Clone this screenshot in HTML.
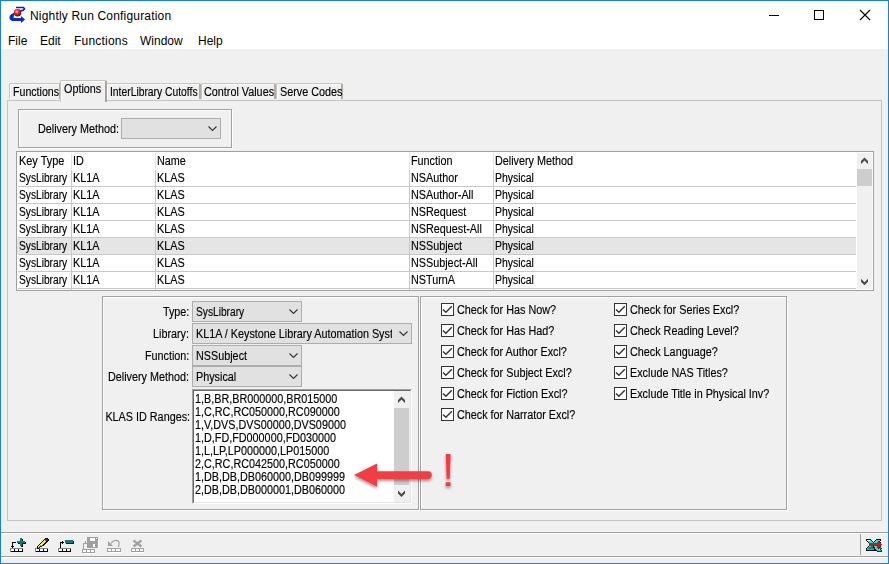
<!DOCTYPE html>
<html><head><meta charset="utf-8">
<style>
*{box-sizing:border-box}
html,body{margin:0;padding:0}
body{width:889px;height:564px;overflow:hidden;background:#f0f0f0;position:relative;font-family:"Liberation Sans",sans-serif;color:#000}
.a{position:absolute}
.t{position:absolute;white-space:nowrap;font-size:12px;line-height:13px;transform-origin:0 0;transform:scaleX(0.9);-webkit-text-stroke:0.15px #000}
.t12{position:absolute;white-space:nowrap;font-size:12px;line-height:15px}
.combo{position:absolute;background:#e1e1e1;border:1px solid #adadad}
.chev{position:absolute;width:8px;height:5px}
.cb{position:absolute;width:13px;height:13px;border:1px solid #333;background:#fff}
.cb svg{position:absolute;left:0;top:0}
.hl{position:absolute;left:18px;width:838px;height:1px;background:#c8c8c8}
.vl{position:absolute;width:1px;background:#c8c8c8}
</style></head><body>

<div class="a" style="left:0;top:0;width:889px;height:49px;background:#fff"></div>
<svg class="a" style="left:9px;top:6px" width="17" height="18" viewBox="9 6 17 18">
  <defs><radialGradient id="rb" cx="0.4" cy="0.35" r="0.65"><stop offset="0" stop-color="#ffd0d0"/><stop offset="0.45" stop-color="#e8202a"/><stop offset="1" stop-color="#700010"/></radialGradient></defs>
  <path d="M16 7.5H23.5L24.5 9L23 10.5H21.5L19.5 12" fill="none" stroke="#0020c8" stroke-width="1.6"/>
  <path d="M14 13C10 14 8.5 17 10 19.5C11 21 12 21 14 21H21V23L25 19.5L21 16V18H15C13.5 18 13 17.5 14 16Z" fill="#0030d0"/>
  <circle cx="17.5" cy="12.8" r="3.8" fill="url(#rb)"/>
</svg>
<div class="t12" style="left:30px;top:9px;letter-spacing:0.18px">Nightly Run Configuration</div>
<div class="a" style="left:769px;top:15px;width:10px;height:1px;background:#000"></div>
<div class="a" style="left:814px;top:10px;width:10px;height:10px;border:1px solid #000"></div>
<svg class="a" style="left:859px;top:9px" width="12" height="12" viewBox="0 0 12 12"><path d="M1 1L11 11M11 1L1 11" stroke="#000" stroke-width="1.1"/></svg>
<div class="t12" style="left:8px;top:34px">File</div>
<div class="t12" style="left:40px;top:34px">Edit</div>
<div class="t12" style="left:74px;top:34px;letter-spacing:0.2px">Functions</div>
<div class="t12" style="left:140px;top:34px">Window</div>
<div class="t12" style="left:198px;top:34px">Help</div>

<div class="a" style="left:7px;top:100px;width:875px;height:421px;border:1px solid #c4c4c4"></div>
<div class="a" style="left:9px;top:83px;width:52px;height:16px;border:1px solid #c8c5be;border-right:2px solid #b0ada6;border-bottom:none;border-radius:2px 2px 0 0;background:#f0f0f0;box-shadow:inset 1px 1px 0 #fbfbfb"></div>
<div class="t" style="left:13.2px;top:86px;transform:scaleX(0.885)">Functions</div>
<div class="a" style="left:106px;top:83px;width:95px;height:16px;border:1px solid #c8c5be;border-right:2px solid #b0ada6;border-bottom:none;border-radius:2px 2px 0 0;background:#f0f0f0;box-shadow:inset 1px 1px 0 #fbfbfb"></div>
<div class="t" style="left:110px;top:86px;transform:scaleX(0.86)">InterLibrary Cutoffs</div>
<div class="a" style="left:201px;top:83px;width:75px;height:16px;border:1px solid #c8c5be;border-right:2px solid #b0ada6;border-bottom:none;border-radius:2px 2px 0 0;background:#f0f0f0;box-shadow:inset 1px 1px 0 #fbfbfb"></div>
<div class="t" style="left:204px;top:86px">Control Values</div>
<div class="a" style="left:276px;top:83px;width:67px;height:16px;border:1px solid #c8c5be;border-right:2px solid #b0ada6;border-bottom:none;border-radius:2px 2px 0 0;background:#f0f0f0;box-shadow:inset 1px 1px 0 #fbfbfb"></div>
<div class="t" style="left:280px;top:86px">Serve Codes</div>
<div class="a" style="left:60px;top:80px;width:47px;height:22px;border:1px solid #c8c5be;border-right:2px solid #a8a5a0;border-bottom:none;border-radius:2px 2px 0 0;background:#f0f0f0;box-shadow:inset 1px 1px 0 #fbfbfb"></div>
<div class="t" style="left:64px;top:83px">Options</div>
<div class="a" style="left:18px;top:109px;width:214px;height:39px;border:1px solid #a0a0a0;box-shadow:inset 1px 1px 0 #fff,1px 1px 0 #fff"></div>
<div class="t" style="left:38px;top:123px">Delivery Method:</div>
<div class="combo" style="left:121px;top:118px;width:100px;height:21px"></div>
<svg class="a" style="left:207.5px;top:126px" width="9" height="5" viewBox="0 0 9 5"><path d="M0.5 0.5L4.5 4.5L8.5 0.5" fill="none" stroke="#333" stroke-width="1.1"/></svg>
<div class="a" style="left:16px;top:151px;width:858px;height:140px;border:1px solid #a0a0a0;background:#fff"></div>
<div class="a" style="left:857px;top:153px;width:15px;height:136px;background:#f0f0f0"></div>
<div class="a" style="left:857px;top:169px;width:15px;height:17px;background:#cdcdcd"></div>
<svg class="a" style="left:860px;top:157px" width="9" height="8" viewBox="0 0 9 8"><path d="M1 7L4.5 3.5L8 7V4L4.5 0.5L1 4Z" fill="#4a4a4a"/></svg>
<svg class="a" style="left:860px;top:278px" width="9" height="8" viewBox="0 0 9 8"><path d="M1 0.8L4.5 4.3L8 0.8V3.8L4.5 7.3L1 3.8Z" fill="#4a4a4a"/></svg>
<div class="vl" style="left:71px;top:153px;height:16px;background:#e5e5e5"></div>
<div class="vl" style="left:155px;top:153px;height:16px;background:#e5e5e5"></div>
<div class="vl" style="left:409px;top:153px;height:16px;background:#e5e5e5"></div>
<div class="vl" style="left:493px;top:153px;height:16px;background:#e5e5e5"></div>
<div class="a" style="left:17px;top:238px;width:839px;height:16px;background:#e5e5e5"></div>
<div class="hl" style="top:186px"></div>
<div class="hl" style="top:203px"></div>
<div class="hl" style="top:220px"></div>
<div class="hl" style="top:237px"></div>
<div class="hl" style="top:254px"></div>
<div class="hl" style="top:271px"></div>
<div class="hl" style="top:288px"></div>
<div class="vl" style="left:71px;top:170px;height:120px"></div>
<div class="vl" style="left:155px;top:170px;height:120px"></div>
<div class="vl" style="left:409px;top:170px;height:120px"></div>
<div class="vl" style="left:493px;top:170px;height:120px"></div>
<div class="t" style="left:19px;top:155px;transform:scaleX(0.91)">Key Type</div>
<div class="t" style="left:73px;top:155px">ID</div>
<div class="t" style="left:157px;top:155px">Name</div>
<div class="t" style="left:411px;top:155px">Function</div>
<div class="t" style="left:495px;top:155px">Delivery Method</div>
<div class="t" style="left:19px;top:172px;transform:scaleX(0.85)">SysLibrary</div>
<div class="t" style="left:73px;top:172px">KL1A</div>
<div class="t" style="left:157px;top:172px">KLAS</div>
<div class="t" style="left:411px;top:172px">NSAuthor</div>
<div class="t" style="left:495px;top:172px;transform:scaleX(0.87)">Physical</div>
<div class="t" style="left:19px;top:189px;transform:scaleX(0.85)">SysLibrary</div>
<div class="t" style="left:73px;top:189px">KL1A</div>
<div class="t" style="left:157px;top:189px">KLAS</div>
<div class="t" style="left:411px;top:189px">NSAuthor-All</div>
<div class="t" style="left:495px;top:189px;transform:scaleX(0.87)">Physical</div>
<div class="t" style="left:19px;top:206px;transform:scaleX(0.85)">SysLibrary</div>
<div class="t" style="left:73px;top:206px">KL1A</div>
<div class="t" style="left:157px;top:206px">KLAS</div>
<div class="t" style="left:411px;top:206px">NSRequest</div>
<div class="t" style="left:495px;top:206px;transform:scaleX(0.87)">Physical</div>
<div class="t" style="left:19px;top:223px;transform:scaleX(0.85)">SysLibrary</div>
<div class="t" style="left:73px;top:223px">KL1A</div>
<div class="t" style="left:157px;top:223px">KLAS</div>
<div class="t" style="left:411px;top:223px">NSRequest-All</div>
<div class="t" style="left:495px;top:223px;transform:scaleX(0.87)">Physical</div>
<div class="t" style="left:19px;top:240px;transform:scaleX(0.85)">SysLibrary</div>
<div class="t" style="left:73px;top:240px">KL1A</div>
<div class="t" style="left:157px;top:240px">KLAS</div>
<div class="t" style="left:411px;top:240px">NSSubject</div>
<div class="t" style="left:495px;top:240px;transform:scaleX(0.87)">Physical</div>
<div class="t" style="left:19px;top:257px;transform:scaleX(0.85)">SysLibrary</div>
<div class="t" style="left:73px;top:257px">KL1A</div>
<div class="t" style="left:157px;top:257px">KLAS</div>
<div class="t" style="left:411px;top:257px">NSSubject-All</div>
<div class="t" style="left:495px;top:257px;transform:scaleX(0.87)">Physical</div>
<div class="t" style="left:19px;top:274px;transform:scaleX(0.85)">SysLibrary</div>
<div class="t" style="left:73px;top:274px">KL1A</div>
<div class="t" style="left:157px;top:274px">KLAS</div>
<div class="t" style="left:411px;top:274px">NSTurnA</div>
<div class="t" style="left:495px;top:274px;transform:scaleX(0.87)">Physical</div>
<div class="a" style="left:102px;top:296px;width:317px;height:214px;border:1px solid #a0a0a0;box-shadow:inset 1px 1px 0 #fff,1px 1px 0 #fff"></div>
<div class="a" style="left:420px;top:296px;width:367px;height:214px;border:1px solid #a0a0a0;box-shadow:inset 1px 1px 0 #fff,1px 1px 0 #fff"></div>
<div class="t" style="right:700px;top:306px;transform-origin:100% 0;transform:scaleX(0.9)">Type:</div>
<div class="t" style="right:700px;top:328px;transform-origin:100% 0;transform:scaleX(0.9)">Library:</div>
<div class="t" style="right:700px;top:350px;transform-origin:100% 0;transform:scaleX(0.9)">Function:</div>
<div class="t" style="right:700px;top:371px;transform-origin:100% 0;transform:scaleX(0.9)">Delivery Method:</div>
<div class="t" style="right:699px;top:411px;transform-origin:100% 0;transform:scaleX(0.9)">KLAS ID Ranges:</div>
<div class="combo" style="left:192px;top:301px;width:110px;height:21px"></div>
<div class="t" style="left:196px;top:306px;transform:scaleX(0.85)">SysLibrary</div>
<svg class="a" style="left:288.5px;top:309px" width="9" height="5" viewBox="0 0 9 5"><path d="M0.5 0.5L4.5 4.5L8.5 0.5" fill="none" stroke="#333" stroke-width="1.1"/></svg>
<div class="combo" style="left:192px;top:323px;width:220px;height:21px"></div>
<div class="a" style="left:193px;top:324px;width:199px;height:19px;overflow:hidden"><div class="t" style="left:3px;top:4px">KL1A / Keystone Library Automation Systems</div></div>
<svg class="a" style="left:398.5px;top:331px" width="9" height="5" viewBox="0 0 9 5"><path d="M0.5 0.5L4.5 4.5L8.5 0.5" fill="none" stroke="#333" stroke-width="1.1"/></svg>
<div class="combo" style="left:192px;top:345px;width:110px;height:21px"></div>
<div class="t" style="left:196px;top:350px">NSSubject</div>
<svg class="a" style="left:288.5px;top:353px" width="9" height="5" viewBox="0 0 9 5"><path d="M0.5 0.5L4.5 4.5L8.5 0.5" fill="none" stroke="#333" stroke-width="1.1"/></svg>
<div class="combo" style="left:192px;top:366px;width:110px;height:21px"></div>
<div class="t" style="left:196px;top:371px">Physical</div>
<svg class="a" style="left:288.5px;top:374px" width="9" height="5" viewBox="0 0 9 5"><path d="M0.5 0.5L4.5 4.5L8.5 0.5" fill="none" stroke="#333" stroke-width="1.1"/></svg>
<div class="a" style="left:192px;top:389px;width:220px;height:115px;background:#fff;border-top:1px solid #a0a0a0;border-left:1px solid #a0a0a0;border-right:1px solid #fff;border-bottom:1px solid #fff"></div>
<div class="a" style="left:193px;top:390px;width:218px;height:113px;border-top:1px solid #696969;border-left:1px solid #696969;border-right:1px solid #e3e3e3;border-bottom:1px solid #e3e3e3"></div>
<div class="a" style="left:394px;top:391px;width:16px;height:111px;background:#f0f0f0"></div>
<div class="a" style="left:394px;top:408px;width:15px;height:77px;background:#cdcdcd"></div>
<svg class="a" style="left:397px;top:396px" width="9" height="8" viewBox="0 0 9 8"><path d="M1 7L4.5 3.5L8 7V4L4.5 0.5L1 4Z" fill="#4a4a4a"/></svg>
<svg class="a" style="left:397px;top:490px" width="9" height="8" viewBox="0 0 9 8"><path d="M1 0.6L4.5 4.1L8 0.6V3.6L4.5 7.1L1 3.6Z" fill="#4a4a4a"/></svg>
<div class="t" style="left:195px;top:393px">1,B,BR,BR000000,BR015000</div>
<div class="t" style="left:195px;top:406px">1,C,RC,RC050000,RC090000</div>
<div class="t" style="left:195px;top:419px">1,V,DVS,DVS00000,DVS09000</div>
<div class="t" style="left:195px;top:432px">1,D,FD,FD000000,FD030000</div>
<div class="t" style="left:195px;top:445px">1,L,LP,LP000000,LP015000</div>
<div class="t" style="left:195px;top:458px">2,C,RC,RC042500,RC050000</div>
<div class="t" style="left:195px;top:471px">1,DB,DB,DB060000,DB099999</div>
<div class="t" style="left:195px;top:484px">2,DB,DB,DB000001,DB060000</div>
<div class="cb" style="left:441px;top:303px"><svg width="11" height="11" viewBox="0 0 11 11"><path d="M1 5.4L3.9 8.2L9.8 2.3" fill="none" stroke="#333" stroke-width="1.4"/></svg></div>
<div class="t" style="left:456.5px;top:304px">Check for Has Now?</div>
<div class="cb" style="left:441px;top:324px"><svg width="11" height="11" viewBox="0 0 11 11"><path d="M1 5.4L3.9 8.2L9.8 2.3" fill="none" stroke="#333" stroke-width="1.4"/></svg></div>
<div class="t" style="left:456.5px;top:325px">Check for Has Had?</div>
<div class="cb" style="left:441px;top:345px"><svg width="11" height="11" viewBox="0 0 11 11"><path d="M1 5.4L3.9 8.2L9.8 2.3" fill="none" stroke="#333" stroke-width="1.4"/></svg></div>
<div class="t" style="left:456.5px;top:346px">Check for Author Excl?</div>
<div class="cb" style="left:441px;top:366px"><svg width="11" height="11" viewBox="0 0 11 11"><path d="M1 5.4L3.9 8.2L9.8 2.3" fill="none" stroke="#333" stroke-width="1.4"/></svg></div>
<div class="t" style="left:456.5px;top:367px">Check for Subject Excl?</div>
<div class="cb" style="left:441px;top:387px"><svg width="11" height="11" viewBox="0 0 11 11"><path d="M1 5.4L3.9 8.2L9.8 2.3" fill="none" stroke="#333" stroke-width="1.4"/></svg></div>
<div class="t" style="left:456.5px;top:388px">Check for Fiction Excl?</div>
<div class="cb" style="left:441px;top:408px"><svg width="11" height="11" viewBox="0 0 11 11"><path d="M1 5.4L3.9 8.2L9.8 2.3" fill="none" stroke="#333" stroke-width="1.4"/></svg></div>
<div class="t" style="left:456.5px;top:409px">Check for Narrator Excl?</div>
<div class="cb" style="left:614px;top:303px"><svg width="11" height="11" viewBox="0 0 11 11"><path d="M1 5.4L3.9 8.2L9.8 2.3" fill="none" stroke="#333" stroke-width="1.4"/></svg></div>
<div class="t" style="left:629.5px;top:304px">Check for Series Excl?</div>
<div class="cb" style="left:614px;top:324px"><svg width="11" height="11" viewBox="0 0 11 11"><path d="M1 5.4L3.9 8.2L9.8 2.3" fill="none" stroke="#333" stroke-width="1.4"/></svg></div>
<div class="t" style="left:629.5px;top:325px">Check Reading Level?</div>
<div class="cb" style="left:614px;top:345px"><svg width="11" height="11" viewBox="0 0 11 11"><path d="M1 5.4L3.9 8.2L9.8 2.3" fill="none" stroke="#333" stroke-width="1.4"/></svg></div>
<div class="t" style="left:629.5px;top:346px">Check Language?</div>
<div class="cb" style="left:614px;top:366px"><svg width="11" height="11" viewBox="0 0 11 11"><path d="M1 5.4L3.9 8.2L9.8 2.3" fill="none" stroke="#333" stroke-width="1.4"/></svg></div>
<div class="t" style="left:629.5px;top:367px">Exclude NAS Titles?</div>
<div class="cb" style="left:614px;top:387px"><svg width="11" height="11" viewBox="0 0 11 11"><path d="M1 5.4L3.9 8.2L9.8 2.3" fill="none" stroke="#333" stroke-width="1.4"/></svg></div>
<div class="t" style="left:629.5px;top:388px">Exclude Title in Physical Inv?</div>
<svg class="a" style="left:340px;top:445px" width="130" height="55" viewBox="340 445 130 55">
  <defs><filter id="sh" x="-10%" y="-20%" width="130%" height="160%"><feDropShadow dx="0" dy="2" stdDeviation="1.5" flood-color="#000" flood-opacity="0.4"/></filter></defs>
  <g filter="url(#sh)" fill="#f33d42">
    <path d="M354 475L377 463.5V471.3H428A3.8 3.8 0 0 1 428 478.9H377V486.7Z"/>
    <path d="M445.7 454H450.6L449.8 478.7H446.6Z"/>
    <rect x="445.7" y="482.2" width="4.9" height="3.8"/>
  </g>
</svg>
<div class="a" style="left:1px;top:532px;width:887px;height:1px;background:#a0a0a0"></div>
<div class="a" style="left:1px;top:533px;width:887px;height:1px;background:#fff"></div>
<div class="a" style="left:1px;top:556px;width:887px;height:1px;background:#a0a0a0"></div>
<div class="a" style="left:1px;top:557px;width:887px;height:1px;background:#fff"></div>
<div class="a" style="left:860px;top:534px;width:1px;height:21px;background:#a0a0a0"></div>
<svg class="a" style="left:0;top:530px" width="889" height="30" viewBox="0 530 889 30" shape-rendering="crispEdges">
<!-- add record -->
<g>
<rect x="10" y="548" width="13" height="4" fill="#808080"/><rect x="11" y="549" width="12" height="3" fill="#000"/>
<rect x="11" y="549" width="3" height="2" fill="#fff"/><rect x="15" y="549" width="3" height="2" fill="#fff"/><rect x="19" y="549" width="3" height="2" fill="#fff"/>
<rect x="12" y="542" width="4" height="1" fill="#000"/><rect x="12" y="542" width="1" height="6" fill="#000"/><rect x="11" y="546" width="3" height="1" fill="#000"/>
<rect x="21" y="539" width="2" height="8" fill="#000"/><rect x="18" y="542" width="8" height="2" fill="#000"/>
<rect x="20" y="538" width="2" height="8" fill="#008080"/><rect x="17" y="541" width="8" height="2" fill="#008080"/>
</g>
<!-- pencil -->
<g>
<rect x="35" y="548" width="13" height="4" fill="#808080"/><rect x="36" y="549" width="12" height="3" fill="#000"/>
<rect x="36" y="549" width="3" height="2" fill="#fff"/><rect x="40" y="549" width="3" height="2" fill="#fff"/><rect x="44" y="549" width="3" height="2" fill="#fff"/>
</g>
<g><rect x="45" y="538" width="3" height="1" fill="#000"/><rect x="44" y="539" width="1" height="1" fill="#000"/><rect x="45" y="539" width="3" height="1" fill="#a000a0"/><rect x="48" y="539" width="1" height="1" fill="#000"/><rect x="43" y="540" width="1" height="1" fill="#000"/><rect x="44" y="540" width="1" height="1" fill="#f8f800"/><rect x="45" y="540" width="2" height="1" fill="#a000a0"/><rect x="47" y="540" width="2" height="1" fill="#000"/><rect x="42" y="541" width="1" height="1" fill="#000"/><rect x="43" y="541" width="3" height="1" fill="#f8f800"/><rect x="46" y="541" width="2" height="1" fill="#000"/><rect x="41" y="542" width="1" height="1" fill="#000"/><rect x="42" y="542" width="3" height="1" fill="#f8f800"/><rect x="45" y="542" width="2" height="1" fill="#000"/><rect x="40" y="543" width="1" height="1" fill="#000"/><rect x="41" y="543" width="3" height="1" fill="#f8f800"/><rect x="44" y="543" width="2" height="1" fill="#000"/><rect x="39" y="544" width="1" height="1" fill="#000"/><rect x="40" y="544" width="3" height="1" fill="#f8f800"/><rect x="43" y="544" width="2" height="1" fill="#000"/><rect x="38" y="545" width="1" height="1" fill="#000"/><rect x="39" y="545" width="1" height="1" fill="#fff"/><rect x="40" y="545" width="1" height="1" fill="#a0a0a0"/><rect x="41" y="545" width="1" height="1" fill="#fff"/><rect x="42" y="545" width="2" height="1" fill="#000"/><rect x="37" y="546" width="1" height="1" fill="#000"/><rect x="38" y="546" width="1" height="1" fill="#fff"/><rect x="39" y="546" width="1" height="1" fill="#a0a0a0"/><rect x="40" y="546" width="2" height="1" fill="#000"/><rect x="37" y="547" width="1" height="1" fill="#000"/><rect x="38" y="547" width="1" height="1" fill="#a0a0a0"/><rect x="39" y="547" width="1" height="1" fill="#000"/><rect x="37" y="548" width="2" height="1" fill="#000"/></g>
<!-- delete record -->
<g>
<rect x="58" y="548" width="13" height="4" fill="#808080"/><rect x="59" y="549" width="12" height="3" fill="#000"/>
<rect x="59" y="549" width="3" height="2" fill="#fff"/><rect x="63" y="549" width="3" height="2" fill="#fff"/><rect x="67" y="549" width="3" height="2" fill="#fff"/>
<rect x="60" y="542" width="1" height="6" fill="#000"/><rect x="60" y="542" width="4" height="1" fill="#000"/><rect x="62" y="541" width="1" height="3" fill="#000"/>
<rect x="66" y="541" width="8" height="3" fill="#000"/>
<rect x="65" y="540" width="8" height="3" fill="#008080"/>
</g>
<!-- save (disabled) -->
<g fill="#a0a0a0">
<rect x="82" y="549" width="13" height="4"/>
<rect x="87" y="537" width="11" height="11"/>
<rect x="83" y="543" width="1" height="6"/><rect x="83" y="543" width="4" height="1"/><rect x="85" y="541" width="1" height="3"/>
</g>
<g fill="#fff">
<rect x="83" y="550" width="3" height="2"/><rect x="87" y="550" width="3" height="2"/><rect x="91" y="550" width="3" height="2"/>
<rect x="90" y="538" width="5" height="3"/><rect x="96" y="538" width="1" height="1"/><rect x="93" y="544" width="2" height="3"/>
<rect x="84" y="553" width="12" height="1"/><rect x="98" y="538" width="1" height="10"/>
</g>
<!-- undo (disabled) -->
<g fill="#a0a0a0">
<rect x="107" y="548" width="14" height="4"/>
<path d="M108 541V546H113Z" shape-rendering="geometricPrecision"/>
</g>
<path d="M111 543.5C113 540 118.5 539 119 543C119.2 545 118.5 546 118.5 547" fill="none" stroke="#a0a0a0" stroke-width="1.2" shape-rendering="geometricPrecision"/>
<g fill="#fff">
<rect x="108" y="549" width="3" height="2"/><rect x="112" y="549" width="3" height="2"/><rect x="116" y="549" width="4" height="2"/>
<rect x="108" y="552" width="13" height="1"/>
</g>
<!-- cancel (disabled) -->
<g fill="#a0a0a0">
<rect x="131" y="548" width="13" height="4"/>
</g>
<path d="M133.5 540.5L141.5 546.5M141.5 540.5L133.5 546.5" stroke="#a0a0a0" stroke-width="2.2" shape-rendering="geometricPrecision"/>
<g fill="#fff">
<rect x="132" y="549" width="3" height="2"/><rect x="136" y="549" width="3" height="2"/><rect x="140" y="549" width="3" height="2"/>
<rect x="132" y="552" width="12" height="1"/>
</g>
<!-- exit -->
<g><rect x="866" y="539" width="5" height="1" fill="#000"/><rect x="876" y="539" width="5" height="1" fill="#000"/><rect x="866" y="540" width="1" height="1" fill="#000"/><rect x="867" y="540" width="3" height="1" fill="#fff"/><rect x="870" y="540" width="1" height="1" fill="#00f0f0"/><rect x="871" y="540" width="1" height="1" fill="#000"/><rect x="875" y="540" width="1" height="1" fill="#000"/><rect x="876" y="540" width="4" height="1" fill="#00f0f0"/><rect x="880" y="540" width="1" height="1" fill="#000"/><rect x="867" y="541" width="1" height="1" fill="#000"/><rect x="868" y="541" width="4" height="1" fill="#00f0f0"/><rect x="872" y="541" width="1" height="1" fill="#000"/><rect x="874" y="541" width="1" height="1" fill="#000"/><rect x="875" y="541" width="3" height="1" fill="#00f0f0"/><rect x="878" y="541" width="1" height="1" fill="#f00"/><rect x="879" y="541" width="1" height="1" fill="#000"/><rect x="868" y="542" width="1" height="1" fill="#000"/><rect x="869" y="542" width="4" height="1" fill="#00f0f0"/><rect x="873" y="542" width="1" height="1" fill="#000"/><rect x="874" y="542" width="3" height="1" fill="#00f0f0"/><rect x="877" y="542" width="3" height="1" fill="#f00"/><rect x="880" y="542" width="1" height="1" fill="#000"/><rect x="869" y="543" width="12" height="1" fill="#f00"/><rect x="869" y="544" width="13" height="1" fill="#f00"/><rect x="869" y="545" width="12" height="1" fill="#f00"/><rect x="868" y="546" width="1" height="1" fill="#000"/><rect x="869" y="546" width="2" height="1" fill="#00f0f0"/><rect x="871" y="546" width="2" height="1" fill="#008080"/><rect x="873" y="546" width="1" height="1" fill="#000"/><rect x="874" y="546" width="3" height="1" fill="#00f0f0"/><rect x="877" y="546" width="3" height="1" fill="#f00"/><rect x="880" y="546" width="1" height="1" fill="#000"/><rect x="867" y="547" width="1" height="1" fill="#000"/><rect x="868" y="547" width="1" height="1" fill="#00f0f0"/><rect x="869" y="547" width="4" height="1" fill="#008080"/><rect x="873" y="547" width="2" height="1" fill="#000"/><rect x="875" y="547" width="2" height="1" fill="#00f0f0"/><rect x="877" y="547" width="2" height="1" fill="#f00"/><rect x="879" y="547" width="1" height="1" fill="#000"/><rect x="880" y="547" width="1" height="1" fill="#008080"/><rect x="866" y="548" width="1" height="1" fill="#000"/><rect x="867" y="548" width="1" height="1" fill="#00f0f0"/><rect x="868" y="548" width="6" height="1" fill="#008080"/><rect x="874" y="548" width="1" height="1" fill="#000"/><rect x="875" y="548" width="3" height="1" fill="#00f0f0"/><rect x="878" y="548" width="1" height="1" fill="#000"/><rect x="879" y="548" width="1" height="1" fill="#00f0f0"/><rect x="880" y="548" width="1" height="1" fill="#008080"/><rect x="881" y="548" width="1" height="1" fill="#000"/><rect x="866" y="549" width="1" height="1" fill="#000"/><rect x="867" y="549" width="7" height="1" fill="#909090"/><rect x="874" y="549" width="2" height="1" fill="#000"/><rect x="876" y="549" width="4" height="1" fill="#00f0f0"/><rect x="880" y="549" width="1" height="1" fill="#000"/><rect x="866" y="550" width="11" height="1" fill="#000"/><rect x="877" y="550" width="4" height="1" fill="#00f0f0"/><rect x="881" y="550" width="1" height="1" fill="#000"/><rect x="877" y="551" width="5" height="1" fill="#000"/></g>
</svg>

<div class="a" style="left:0;top:0;width:889px;height:564px;border:1px solid #1a7fd6;pointer-events:none"></div>
</body></html>
